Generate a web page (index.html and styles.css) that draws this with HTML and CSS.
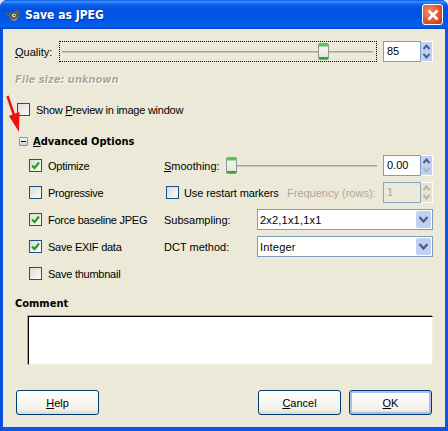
FILE: index.html
```html
<!DOCTYPE html>
<html lang="en">
<head>
<meta charset="utf-8">
<title>Save as JPEG</title>
<link rel="stylesheet" href="styles.css">
</head>
<body>
<div class="window">
  <header class="titlebar">
    <svg class="wilber" width="16" height="16" viewBox="0 0 16 16"><path d="M0 5 C3 7 6 5 9 5 L12 2.500 L12.500 5 L16 3 L14 7 C15 10 13 13 9 14 C6 13 4 11 3.500 9 C2 8.500 1 7 0 5Z" fill="#5f5d52"/><path d="M5 11 C7 13 10 13 13 10 C12 13 10 14 9 14 C7 13.500 6 12.500 5 11Z" fill="#9a9482"/><circle cx="9" cy="8.500" r="1.800" fill="#e8e8e0"/><circle cx="9.300" cy="8.500" r="0.800" fill="#111"/></svg>
    <span class="title-text">Save as JPEG</span>
    <button class="close"><svg width="14" height="14" viewBox="0 0 14 14"><path d="M2.500 2.500 L11.500 11.500 M11.500 2.500 L2.500 11.500" stroke="#fff" stroke-width="2.600"/></svg></button>
  </header>
  <main class="content">
    <div class="quality-row">
      <label class="quality-label"><u>Q</u>uality:</label>
      <div class="quality-slider">
        <div class="track"></div>
        <div class="thumb quality-thumb"></div>
        <div class="track track-short"></div>
      </div>
      <div class="spin"><span class="entry">85</span><span class="arrows"><svg width="11" height="19" viewBox="0 0 11 19"><path d="M2.500 7 L5.500 3.500 L8.500 7 M2.500 12 L5.500 15.500 L8.500 12" fill="none" stroke="#4d6185" stroke-width="2"/></svg></span></div>
    </div>
    <div class="file-size">File size: unknown</div>
    <div class="check-line preview-line"><span class="box"></span><span>Show <u>P</u>review in image window</span></div>
    <div class="expander"><span class="expander-box"></span><span class="expander-label"><u>A</u>dvanced Options</span></div>
    <div class="advanced">
      <div class="check-col">
        <div class="check-line"><span class="box checked"><svg width="11" height="11" viewBox="0 0 11 11"><path d="M2 5.500 L4.500 8 L9 2.500" fill="none" stroke="#21a121" stroke-width="2.200"/></svg></span><span>Optimize</span></div>
        <div class="check-line"><span class="box"></span><span>Progressive</span></div>
        <div class="check-line"><span class="box checked"><svg width="11" height="11" viewBox="0 0 11 11"><path d="M2 5.500 L4.500 8 L9 2.500" fill="none" stroke="#21a121" stroke-width="2.200"/></svg></span><span>Force baseline JPEG</span></div>
        <div class="check-line"><span class="box checked"><svg width="11" height="11" viewBox="0 0 11 11"><path d="M2 5.500 L4.500 8 L9 2.500" fill="none" stroke="#21a121" stroke-width="2.200"/></svg></span><span>Save EXIF data</span></div>
        <div class="check-line"><span class="box"></span><span>Save thumbnail</span></div>
      </div>
      <div class="option-col">
        <div class="option-row">
          <span class="opt-label"><u>S</u>moothing:</span>
          <div class="smooth-slider"><div class="thumb"></div><div class="track"></div></div>
          <div class="spin"><span class="entry">0.00</span><span class="arrows"><svg width="11" height="19" viewBox="0 0 11 19"><path d="M2.500 7 L5.500 3.500 L8.500 7" fill="none" stroke="#4d6185" stroke-width="2"/><path d="M2.500 12 L5.500 15.500 L8.500 12" fill="none" stroke="#b5b5aa" stroke-width="2"/></svg></span></div>
        </div>
        <div class="option-row">
          <div class="check-line restart"><span class="box"></span><span>Use restart markers</span></div>
          <span class="freq">Frequency (rows):</span>
          <div class="spin disabled"><span class="entry">1</span><span class="arrows"><svg width="11" height="19" viewBox="0 0 11 19"><path d="M2.500 7 L5.500 3.500 L8.500 7 M2.500 12 L5.500 15.500 L8.500 12" fill="none" stroke="#b5b5aa" stroke-width="2"/></svg></span></div>
        </div>
        <div class="option-row">
          <span class="opt-label">Subsampling:</span>
          <div class="combo"><span class="combo-text">2x2,1x1,1x1</span><span class="combo-btn"><svg width="11" height="9" viewBox="0 0 11 9"><path d="M1.500 2 L5.500 6.500 L9.500 2" fill="none" stroke="#4d6185" stroke-width="2.400"/></svg></span></div>
        </div>
        <div class="option-row">
          <span class="opt-label">DCT method:</span>
          <div class="combo"><span class="combo-text">Integer</span><span class="combo-btn"><svg width="11" height="9" viewBox="0 0 11 9"><path d="M1.500 2 L5.500 6.500 L9.500 2" fill="none" stroke="#4d6185" stroke-width="2.400"/></svg></span></div>
        </div>
      </div>
    </div>
    <div class="comment-label">Comment</div>
    <div class="comment-box"></div>
    <footer class="buttons">
      <button class="btn"><u>H</u>elp</button>
      <span class="spacer"></span>
      <button class="btn"><u>C</u>ancel</button>
      <button class="btn default"><u>O</u>K</button>
    </footer>
  </main>
  <svg class="red-arrow" width="22" height="48" viewBox="0 0 22 48"><path d="M1.500 1 L9 23" stroke="#f01010" stroke-width="2.500" fill="none"/><path d="M3 21 L13.500 17 L13 37 Z" fill="#f01010"/></svg>
</div>
</body>
</html>
```
FILE: styles.css
```css
* { box-sizing: border-box; }
html, body { margin: 0; padding: 0; }
body { width: 448px; height: 431px; overflow: hidden; background: #e8e8e8; font-family: "Liberation Sans", Arial, sans-serif; font-size: 11px; color: #000; }
u { text-underline-offset: 1px; }
.window { position: relative; width: 448px; height: 431px; display: flex; flex-direction: column; border-radius: 7px 7px 0 0; overflow: hidden; background: linear-gradient(to right, #0849dc 0, #0b55e6 3px, #0b55e6 100%); }
.titlebar { height: 29px; flex: none; display: flex; align-items: center; padding: 0 5px 0 5px; background: linear-gradient(to bottom, #0a5ae6 0, #3a93ff 2px, #0f62ee 4px, #0053e0 9px, #0055e5 20px, #0661f0 26px, #0244c8 29px); }
.wilber { flex: none; }
.title-text { margin-left: 4px; color: #fff; font-family: "DejaVu Sans", sans-serif; font-stretch: condensed; font-weight: bold; font-size: 12px; text-shadow: 1px 1px 0 #0a2f9c; flex: 1; }
.close { width: 21px; height: 21px; padding: 0; border: 1px solid #fff; border-radius: 3px; background: radial-gradient(circle at 35% 35%, #ef8a6a, #dc4a28 70%, #c5371c); display: flex; align-items: center; justify-content: center; }
.content { flex: 1; margin: 0 3px 4px 3px; background: #ece9d8; padding: 12px; display: flex; flex-direction: column; min-height: 0; }
.quality-row { display: flex; align-items: center; height: 21px; }
.quality-label { width: 44px; flex: none; }
.quality-slider { width: 318px; height: 21px; border: 1px dotted #000; display: flex; align-items: center; padding: 0 3px 0 2px; }
.track { flex: 1; background: #a5a397; border-bottom: 1px solid #c9c7b8; height: 2px; }
.track-short { flex: none; width: 44px; }
.thumb { width: 11px; height: 17px; flex: none; border: 1px solid #8a9a94; border-radius: 2px; background: linear-gradient(to bottom, #55c55a 0, #55c55a 2px, #f4f3ee 3px, #e6e5dd 13px, #2fa832 13px, #2fa832 100%); }
.spin { width: 50px; height: 21px; flex: none; display: flex; margin-left: 6px; }
.entry { width: 38px; height: 21px; background: #fff; border: 1px solid #7f9db9; padding-left: 3px; line-height: 19px; font-size: 11px; }
.arrows { width: 12px; height: 21px; background: #c1d0f3; border: 1px solid #fff; border-left: none; display: flex; }
.spin.disabled .entry { background: #ece9d8; color: #aca899; border-color: #8ea6bd; }
.spin.disabled .arrows { background: #e6e3d3; }
.file-size { margin-top: 11px; height: 14px; line-height: 14px; font-family: "DejaVu Sans", sans-serif; font-stretch: condensed; font-weight: bold; font-style: italic; color: #aca899; text-shadow: 1px 1px 0 #fff; font-size: 11px; }
.check-line { display: flex; align-items: center; gap: 6px; height: 21px; white-space: nowrap; letter-spacing: -0.25px; }
.preview-line { margin-top: 13px; margin-left: 2px; }
.box { width: 13px; height: 13px; flex: none; border: 1px solid #1c5180; background: linear-gradient(135deg, #dcdcd7, #fbfbf9); display: flex; align-items: center; justify-content: center; }
.expander { display: flex; align-items: center; gap: 5px; margin-top: 14px; margin-left: 4px; height: 16px; }
.expander-box { width: 9px; height: 9px; flex: none; border: 1px solid #7f97b5; border-radius: 1px; background: linear-gradient(#f6f6f0, #c8d0e0); display: flex; align-items: center; justify-content: center; }
.expander-box::after { content: ""; width: 5px; height: 1px; background: #000; }
.expander-label { font-family: "DejaVu Sans", sans-serif; font-stretch: condensed; font-weight: bold; font-size: 11px; }
.advanced { display: flex; margin-top: 6px; padding-left: 14px; }
.check-col { width: 135px; flex: none; display: flex; flex-direction: column; gap: 6px; }
.option-col { flex: 1; display: flex; flex-direction: column; gap: 6px; }
.option-row { display: flex; align-items: center; height: 21px; white-space: nowrap; }
.opt-label { width: 62px; flex: none; }
.smooth-slider { width: 151px; display: flex; align-items: center; height: 21px; }
.restart { margin-left: 2px; gap: 5px; width: 115px; flex: none; letter-spacing: -0.1px; }
.freq { margin-left: 6px; flex: none; color: #aca899; }
.option-row .spin { margin-left: auto; }
.combo { margin-left: 31px; width: 176px; height: 21px; background: #fff; border: 1px solid #7f9db9; display: flex; align-items: center; padding-left: 2px; font-size: 11px; }
.combo-text { flex: 1; letter-spacing: 0.2px; }
.combo-btn { width: 15px; height: 17px; margin-right: 1px; border-radius: 2px; background: #c1d0f3; display: flex; align-items: center; justify-content: center; }
.comment-label { margin-top: 13px; height: 14px; line-height: 14px; font-family: "DejaVu Sans", sans-serif; font-stretch: condensed; font-weight: bold; }
.comment-box { margin-top: 5px; margin-left: 13px; width: 405px; height: 49px; flex: none; background: #fff; border: 1px solid; border-color: #000 #f1efe2 #f1efe2 #000; box-shadow: -1px -1px 0 #aca899; }
.buttons { margin-top: 25px; padding: 0 1px; display: flex; gap: 8px; }
.spacer { flex: 1; }
.btn { width: 83px; height: 25px; padding: 0; font-family: inherit; font-size: 11px; color: #000; border: 1px solid #003c74; border-radius: 3px; background: linear-gradient(to bottom, #fff, #f2f1e9 80%, #dcd8cb); }
.btn.default { box-shadow: inset 0 0 0 2px #a9bfe9; }
.red-arrow { position: absolute; left: 6px; top: 95px; }
```
